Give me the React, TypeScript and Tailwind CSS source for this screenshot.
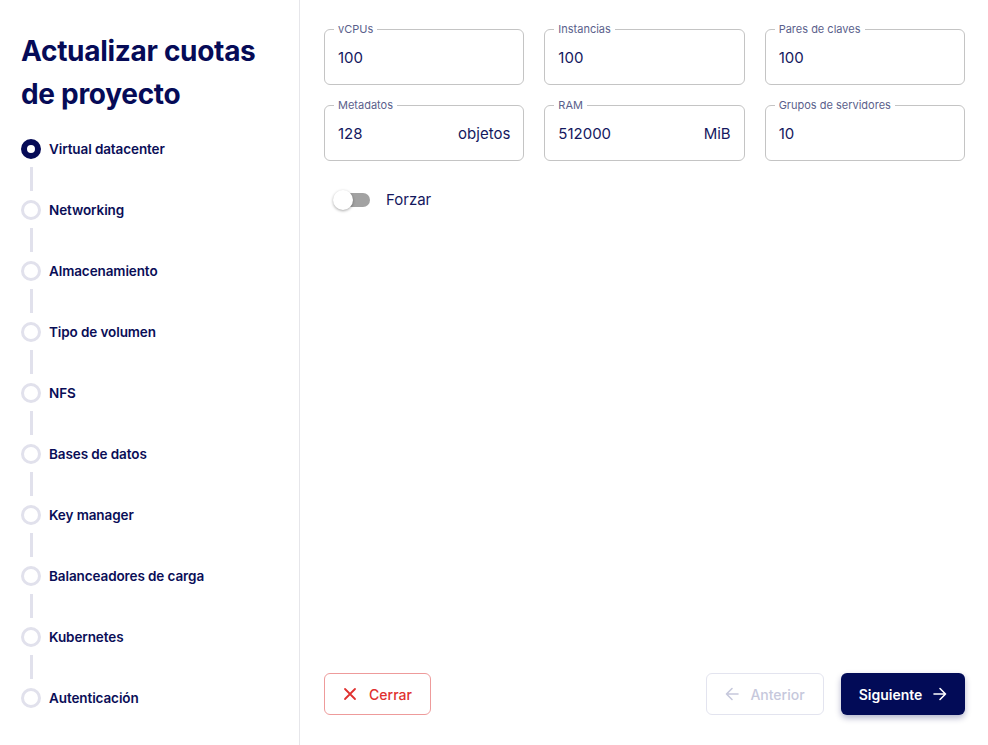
import React from "react";

const steps = [
  "Virtual datacenter",
  "Networking",
  "Almacenamiento",
  "Tipo de volumen",
  "NFS",
  "Bases de datos",
  "Key manager",
  "Balanceadores de carga",
  "Kubernetes",
  "Autenticación",
];

type Field = { label: string; value: string; unit?: string };

const fields: Field[] = [
  { label: "vCPUs", value: "100" },
  { label: "Instancias", value: "100" },
  { label: "Pares de claves", value: "100" },
  { label: "Metadatos", value: "128", unit: "objetos" },
  { label: "RAM", value: "512000", unit: "MiB" },
  { label: "Grupos de servidores", value: "10" },
];

function OutlinedField({ label, value, unit }: Field) {
  return (
    <div className="relative h-14 rounded-[6px] border border-[#c4c4c4] flex items-center px-[13px] pt-[2px]">
      <span className="absolute -top-[8px] left-[9px] bg-white px-[4px] text-[11px] leading-[15px] text-[#5b5f8c]">
        {label}
      </span>
      <span className="flex-1 text-[15px] text-[#14185e]">{value}</span>
      {unit && <span className="text-[15px] text-[#14185e]">{unit}</span>}
    </div>
  );
}

export default function App() {
  return (
    <div
      className="flex h-[745px] w-full bg-white text-[#0a0e57] overflow-hidden"
      style={{ fontFamily: "Inter, 'Noto Sans', sans-serif" }}
    >
      {/* Steps sidebar */}
      <aside className="w-[300px] shrink-0 border-r border-[#e6e6ea] pl-[21px] pt-[30px]">
        <h1 className="text-[28px] leading-[43px] font-bold tracking-[-0.3px] text-[#060b57]">
          Actualizar cuotas
          <br />
          de proyecto
        </h1>
        <ol className="mt-[23px]">
          {steps.map((s, i) => (
            <li key={s}>
              <div className="flex items-center h-5">
                <span
                  className={
                    i === 0
                      ? "w-5 h-5 rounded-full border-[6px] border-[#060b57] bg-white"
                      : "w-5 h-5 rounded-full border-[3px] border-[#e1e1ec] bg-white"
                  }
                />
                <span className="ml-[8px] text-[13.5px] font-semibold tracking-[-0.1px] text-[#0a0e57]">{s}</span>
              </div>
              {i < steps.length - 1 && (
                <div className="h-[41px] pt-2">
                  <div className="ml-[9px] w-[3px] h-6 bg-[#e1e1ec]" />
                </div>
              )}
            </li>
          ))}
        </ol>
      </aside>

      {/* Form area */}
      <main className="flex-1 flex flex-col pl-6 pr-[23px] pt-[29px] pb-[30px]">
        <div className="grid grid-cols-3 gap-x-5 gap-y-5">
          {fields.map((f) => (
            <OutlinedField key={f.label} {...f} />
          ))}
        </div>

        <div className="mt-[29px] flex items-center h-[20px] pl-[9px]">
          <div className="relative w-[38px] h-[20px] flex items-center">
            <div className="ml-[2px] w-[35px] h-[14px] rounded-full bg-[#a2a2a2]" />
            <div className="absolute left-0 top-0 w-5 h-5 rounded-full bg-white shadow-[0_1px_3px_rgba(0,0,0,0.35)]" />
          </div>
          <span className="ml-[15px] text-[15px] text-[#14185e]">Forzar</span>
        </div>

        <div className="mt-auto flex items-center">
          <button className="h-[42px] w-[107px] rounded-[6px] border border-[#ee9b9b] flex items-center justify-center gap-[12px] text-[14px] font-medium text-[#e0312f]">
            <svg width="14" height="14" viewBox="0 0 14 14" fill="none" stroke="currentColor" strokeWidth="1.8" strokeLinecap="round">
              <path d="M2 2l10 10M12 2L2 12" />
            </svg>
            Cerrar
          </button>
          <div className="ml-auto flex items-center gap-[17px]">
            <button className="h-[42px] w-[118px] rounded-[6px] border border-[#e3e4ef] flex items-center justify-center gap-[11px] text-[14px] font-medium text-[#c6c8dc]">
              <svg width="14" height="14" viewBox="0 0 14 14" fill="none" stroke="currentColor" strokeWidth="1.6" strokeLinecap="round" strokeLinejoin="round">
                <path d="M13 7H1.5M7 1.5L1.5 7 7 12.5" />
              </svg>
              Anterior
            </button>
            <button className="h-[42px] w-[124px] rounded-[6px] bg-[#020b57] flex items-center justify-center gap-[11px] text-[14px] font-semibold text-white shadow-[0_3px_6px_rgba(2,11,87,0.3)]">
              Siguiente
              <svg width="14" height="14" viewBox="0 0 14 14" fill="none" stroke="currentColor" strokeWidth="1.6" strokeLinecap="round" strokeLinejoin="round">
                <path d="M1 7h11.5M7 1.5L12.5 7 7 12.5" />
              </svg>
            </button>
          </div>
        </div>
      </main>
    </div>
  );
}
